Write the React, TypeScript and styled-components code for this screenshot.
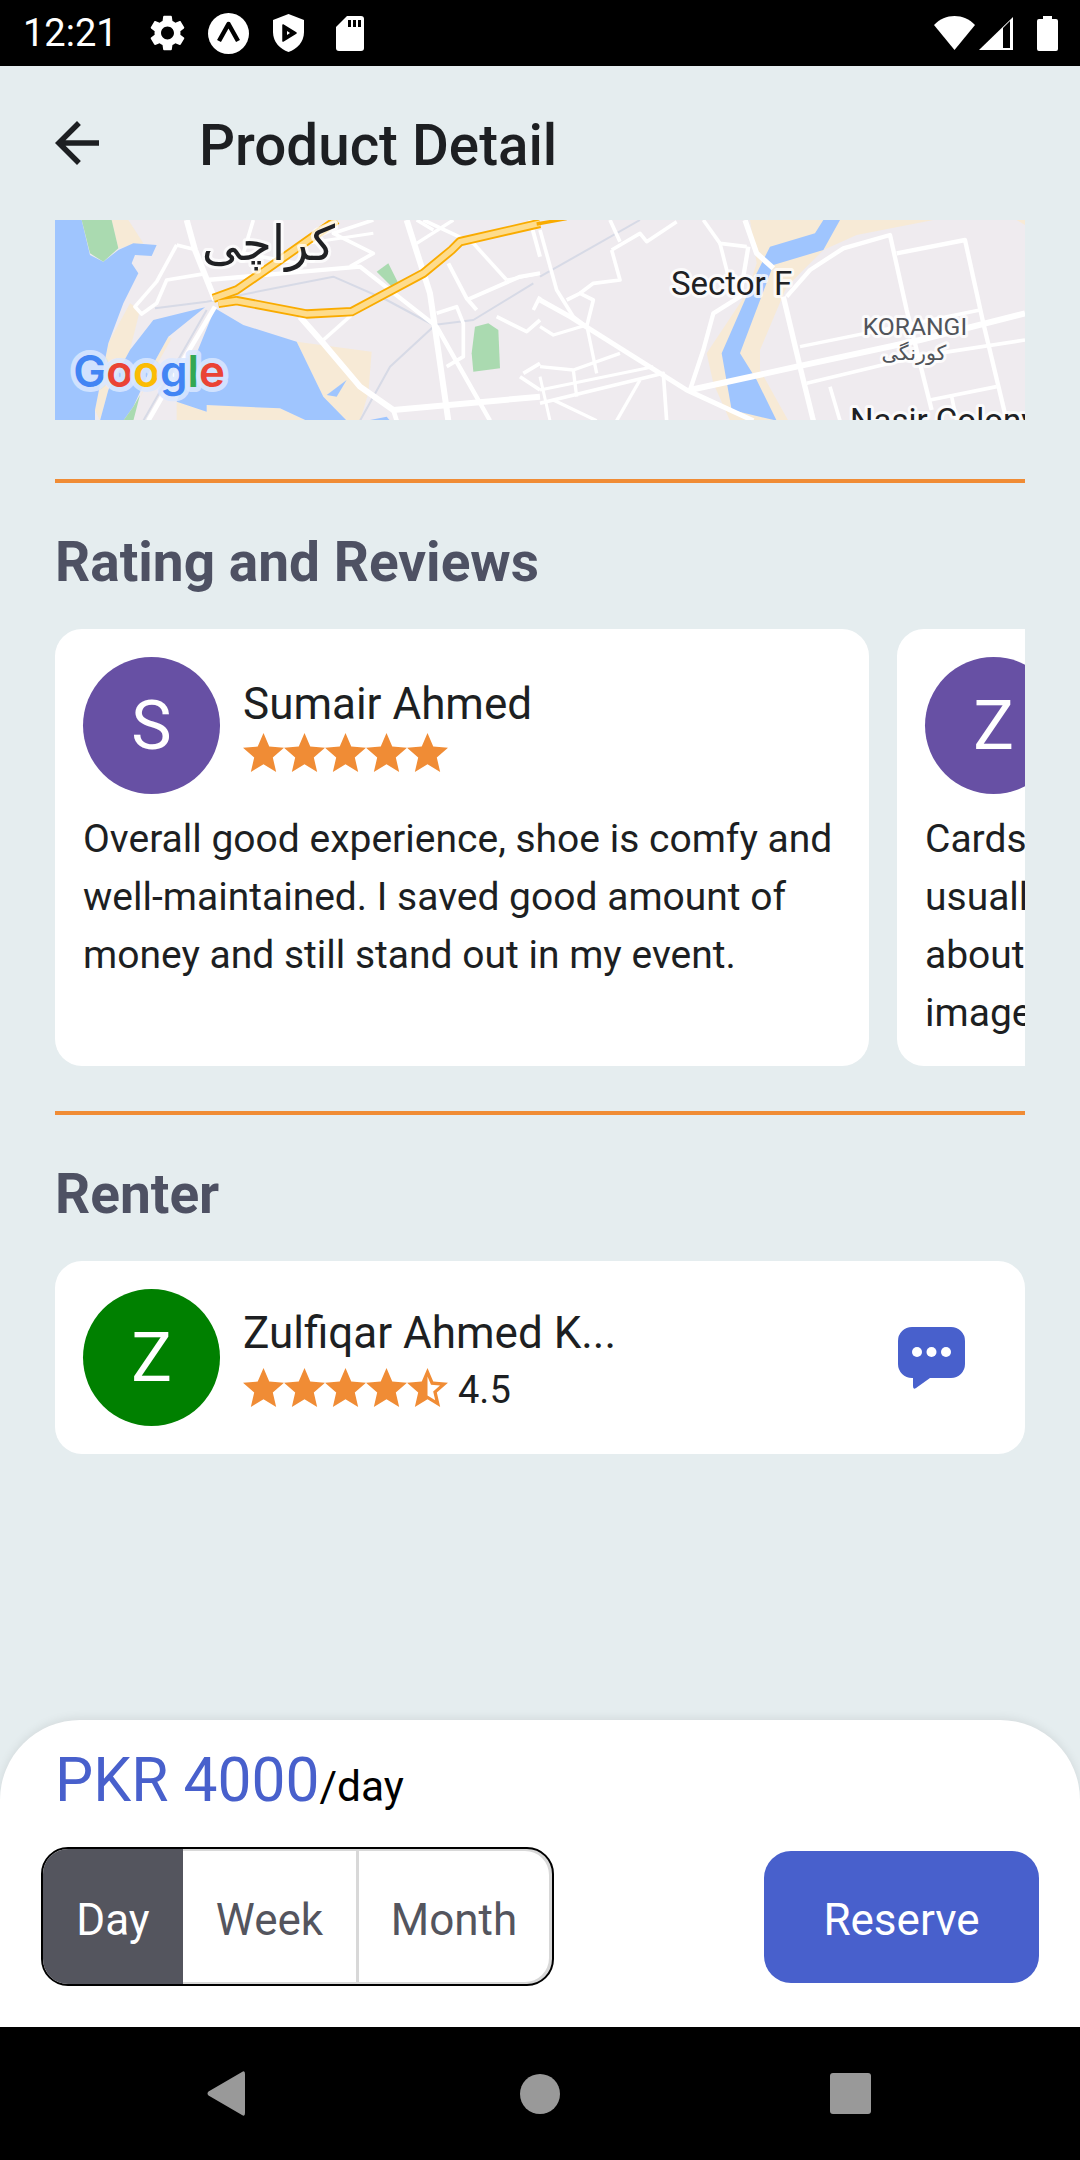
import styled, { createGlobalStyle } from 'styled-components';

const GlobalStyle = createGlobalStyle`
  html, body {
    margin: 0;
    padding: 0;
    background: #000;
  }
  * {
    box-sizing: border-box;
  }
`;

const Page = styled.div`
  width: 1080px;
  height: 2160px;
  display: flex;
  flex-direction: column;
  font-family: Roboto, "Noto Sans", sans-serif;
  background: #e5edef;
  overflow: hidden;
`;

const StatusBar = styled.div`
  height: 66px;
  flex: none;
  background: #000;
  color: #fff;
  display: flex;
  align-items: center;
  justify-content: space-between;
  padding: 0 22px 0 23px;
`;

const StatusGroup = styled.div`
  display: flex;
  align-items: center;
  gap: 23px;
`;

const StatusRight = styled.div`
  display: flex;
  align-items: center;
  gap: 4px;
`;

const Clock = styled.span`
  font-size: 38px;
  line-height: 66px;
  margin-right: 9px;
`;

const Content = styled.div`
  flex: 1;
  display: flex;
  flex-direction: column;
  padding: 0 55px;
`;

const Header = styled.div`
  height: 154px;
  display: flex;
  align-items: center;
  gap: 100px;
`;

const Title = styled.h1`
  margin: 5px 0 0;
  font-size: 56.5px;
  font-weight: 500;
  color: #1d1f22;
`;

const MapBox = styled.div`
  height: 200px;
  overflow: hidden;
  background: #efebef;

  svg {
    display: block;
  }
`;

const Divider = styled.div<{ $top: number }>`
  height: 4px;
  flex: none;
  background: #f08c35;
  margin-top: ${(p) => p.$top}px;
`;

const SectionTitle = styled.h2`
  margin: 0;
  height: 146px;
  padding-top: 46px;
  font-size: 55px;
  line-height: 66px;
  font-weight: 700;
  color: #4e5163;
`;

const ReviewRow = styled.div`
  display: flex;
  gap: 28px;
  overflow: hidden;
`;

const ReviewCard = styled.div`
  flex: none;
  width: 814px;
  height: 437px;
  background: #fff;
  border-radius: 27px;
  padding: 28px;
`;

const RenterCard = styled.div`
  height: 193px;
  background: #fff;
  border-radius: 27px;
  padding: 28px;
  display: flex;
  align-items: center;
  justify-content: space-between;
`;

const Person = styled.div`
  display: flex;
  align-items: center;
  gap: 23px;
`;

const Avatar = styled.div<{ $color: string }>`
  width: 137px;
  height: 137px;
  flex: none;
  border-radius: 50%;
  background: ${(p) => p.$color};
  color: #fff;
  font-size: 68px;
  display: flex;
  align-items: center;
  justify-content: center;
`;

const NameBlock = styled.div<{ $gap: number }>`
  display: flex;
  flex-direction: column;
  gap: ${(p) => p.$gap}px;
`;

const Name = styled.div`
  font-size: 44px;
  line-height: 50px;
  color: #1d1f22;
  white-space: nowrap;
`;

const Stars = styled.div`
  display: flex;
  align-items: center;
  height: 40px;

  svg {
    display: block;
  }
`;

const RatingValue = styled.span`
  font-size: 38px;
  color: #1d1f22;
  margin: 4px 0 0 10px;
`;

const ReviewText = styled.p`
  margin: 16px 0 0;
  font-size: 39px;
  line-height: 58px;
  color: #1d1f22;
  white-space: nowrap;
`;

const ChatButton = styled.div`
  margin-right: 32px;

  svg {
    display: block;
  }
`;

const Sheet = styled.div`
  flex: none;
  height: 307px;
  background: #fff;
  border-radius: 80px 80px 0 0;
  box-shadow: 0 -2px 10px rgba(0, 0, 0, 0.08);
  padding: 26px 41px 0;
`;

const PriceLine = styled.div`
  padding-left: 14px;
  height: 101px;
  white-space: nowrap;
`;

const Price = styled.span`
  font-size: 60.5px;
  line-height: 70px;
  color: #4860cc;
`;

const PriceUnit = styled.span`
  font-size: 42.5px;
  color: #000;
`;

const ControlRow = styled.div`
  display: flex;
  align-items: center;
  justify-content: space-between;
`;

const Segments = styled.div`
  width: 513px;
  height: 139px;
  display: flex;
  border: 2px solid #000;
  border-radius: 27px;
  overflow: hidden;
  background: #d8d8d8;
  padding: 2px 3px 2px 0;
`;

const Segment = styled.div<{ $active?: boolean; $width: number }>`
  width: ${(p) => p.$width}px;
  flex: ${(p) => (p.$width ? 'none' : '1')};
  display: flex;
  align-items: center;
  justify-content: center;
  padding-top: 6px;
  font-size: 44px;
  color: ${(p) => (p.$active ? '#fff' : '#54555e')};
  background: ${(p) => (p.$active ? '#54555e' : '#fff')};
  & + & + & {
    margin-left: 3px;
    border-radius: 0 24px 24px 0;
  }
  ${(p) => (p.$active ? 'margin: -2px 0;' : '')}
`;

const ReserveButton = styled.div`
  width: 275px;
  height: 132px;
  border-radius: 27px;
  background: #4860cc;
  color: #fff;
  font-size: 44px;
  padding-top: 6px;
  display: flex;
  align-items: center;
  justify-content: center;
`;

const NavBar = styled.div`
  height: 133px;
  flex: none;
  background: #000;
  display: flex;
  align-items: center;
  justify-content: space-between;
  padding: 0 209px 0 207px;

  svg {
    display: block;
  }
`;

const NavCircle = styled.div`
  width: 40px;
  height: 40px;
  margin-left: 5px;
  border-radius: 50%;
  background: #999;
`;

const NavSquare = styled.div`
  width: 41px;
  height: 41px;
  border-radius: 3px;
  background: #999;
`;

// map pieces, coords taken from 3x crops of the two halves of the map
const water1 = [
  '45,30 125,30 150,135 190,155 235,120 280,100 350,105 335,138 285,135 275,160 295,190 250,280 205,400 165,600 165,632 45,632',
  '340,330 495,292 385,380 330,480 280,590 250,632 180,632 205,540 270,420',
  '525,295 610,345 770,395 850,560 920,632 800,632 720,595 500,585 500,605 410,575 470,430',
  '860,555 920,510 890,560',
  '980,632 1040,620 1050,632',
];
const sand1 = [
  '215,30 265,30 310,100 235,115',
  '270,280 205,400 165,600 180,632 205,540 270,420 300,300',
  '385,380 395,385 330,500 300,565 330,480',
  '770,395 995,425 985,550 960,632 920,632 850,560',
  '410,575 500,605 500,585 720,595 800,632 410,632',
  '580,460 625,490 575,500',
];
const green1 = [
  '125,30 215,30 235,115 190,155 150,130',
  '1010,185 1045,160 1075,220 1060,235',
  '1295,430 1305,350 1345,340 1375,360 1380,475 1300,485',
  '250,632 280,590 300,555 280,632',
];
const rail1 = [
  '345,295 500,275 880,200 1040,270 1180,345 1300,330 1480,220',
  '960,632 1050,470 1180,350',
  '310,632 500,300',
];
const roads1: [string, number][] = [
  ['440,30 465,120 525,270', 18],
  ['410,105 350,215 285,290 305,312 350,280 380,210 500,190', 11],
  ['410,105 470,120', 11],
  ['500,210 960,170 1190,350 1350,632', 13],
  ['525,290 430,450 325,632', 14],
  ['780,320 850,400 960,530 1060,600 1500,560', 18],
  ['850,390 940,310', 11],
  ['1100,30 1170,250 1225,632', 18],
  ['1280,270 1440,200 1500,190', 12],
  ['1225,160 1280,265 1310,300', 12],
  ['1190,310 1250,290 1270,340 1270,440 1220,470', 11],
  ['1370,320 1460,365 1500,330', 11],
  ['1440,500 1500,540', 11],
  ['1450,490 1500,460', 11],
  ['640,30 610,130 800,165', 11],
  ['1000,30 880,70 1000,130 930,170', 11],
  ['800,100 1000,70', 9],
  ['1150,30 1300,100 1400,210', 11],
  ['1400,210 1500,190', 9],
  ['1060,600 1070,632', 14],
  ['1470,30 1500,140', 12],
  ['1480,300 1500,260', 11],
  ['1130,100 1240,30', 10],
  ['1180,60 1130,30', 10],
];
const highway = [
  '520,265 590,240 720,150 890,30',
  '535,280 590,272 800,312 935,305 1150,190 1235,120 1260,95 1500,40',
];

const water2 = ['850,30 900,30 850,120 700,165 600,430 650,510 710,632 575,600 545,430 650,190 690,110 825,70'];
const sand2 = [
  '630,30 1180,30 950,75 850,120 740,230 660,420 660,480 745,632 570,632 520,520 500,430 620,250 650,160',
  '1430,30 1455,30 1455,45',
];
const rail2 = ['0,200 300,30'];
const roads2: [string, number][] = [
  ['615,30 650,130 700,175', 16],
  ['490,30 540,100 620,110', 11],
  ['540,100 565,200', 11],
  ['625,110 600,260 520,310 490,420 450,540', 13],
  ['740,260 810,180 910,115 1050,75 1100,300 1175,600', 13],
  ['1070,130 1275,90 1330,340 1400,632', 13],
  ['730,260 780,470 820,632', 16],
  ['450,540 770,470 1140,390 1455,310', 18],
  ['780,410 1320,300', 10],
  ['800,520 1130,440 1455,390', 11],
  ['870,530 900,632', 11],
  ['1170,570 1370,530', 11],
  ['1235,560 1250,632', 11],
  ['0,270 90,320 440,540 640,632', 15],
  ['0,60 50,240 100,320 140,350 160,270 120,250 80,270', 11],
  ['215,120 300,70 320,95 410,35', 11],
  ['215,120 240,210 160,220 120,250', 11],
  ['210,30 240,95', 11],
  ['0,350 40,375 140,345 170,490', 10],
  ['240,430 100,480 0,470', 10],
  ['0,580 370,490 380,632', 11],
  ['0,540 340,470', 9],
  ['100,480 110,560', 10],
  ['230,632 300,510', 10],
  ['40,570 170,632', 10],
  ['0,500 30,632', 9],
];

const shapes = (list: string[], fill: string) => list.map((pts) => <polygon key={pts} points={pts} fill={fill} />);
const lines = (list: string[], color: string, width: number) =>
  list.map((pts) => (
    <polyline key={pts} points={pts} fill="none" stroke={color} strokeWidth={width} strokeLinejoin="round" />
  ));

function KarachiMap() {
  const halo = { paintOrder: 'stroke', stroke: '#fff', strokeOpacity: 0.75, strokeWidth: 18, strokeLinejoin: 'round' } as const;
  return (
    <svg width="970" height="200" viewBox="0 0 970 200">
      <g transform="translate(-15 -10) scale(0.33333)">
        {shapes(sand1, '#f7ead6')}
        {shapes(water1, '#9fc5fe')}
        {shapes(green1, '#aadab0')}
        {lines(rail1, '#d7dae6', 6)}
        {roads1.map(([pts, w]) => (
          <polyline key={pts} points={pts} fill="none" stroke="#fff" strokeWidth={w} strokeLinejoin="round" />
        ))}
        {lines(highway, '#f9ab00', 28)}
        {lines(highway, '#fedc8c', 17)}
        <text x="485" y="150" fontSize="145" fill="#202124" fontFamily="'DejaVu Sans', sans-serif" style={halo}>
          کراچی
        </text>
        <text x="100" y="530" fontSize="132" fontFamily="Inter, sans-serif" fontWeight="600" style={{ ...halo, stroke: '#dbe8ff', strokeOpacity: 0.85, strokeWidth: 30 }}>
          <tspan fill="#4285f4">G</tspan>
          <tspan fill="#ea4335">o</tspan>
          <tspan fill="#fbbc05">o</tspan>
          <tspan fill="#4285f4">g</tspan>
          <tspan fill="#34a853">l</tspan>
          <tspan fill="#ea4335">e</tspan>
        </text>
      </g>
      <g transform="translate(485 -10) scale(0.33333)">
        {shapes(sand2, '#f7ead6')}
        {shapes(water2, '#9fc5fe')}
        {lines(rail2, '#d7dae6', 6)}
        {roads2.map(([pts, w]) => (
          <polyline key={pts} points={pts} fill="none" stroke="#fff" strokeWidth={w} strokeLinejoin="round" />
        ))}
        {lines(['-10,42 80,26'], '#f9ab00', 10)}
        <text x="393" y="255" fontSize="99" fill="#202124" style={halo}>
          Sector F
        </text>
        <text x="968" y="375" fontSize="74" fill="#50545a" style={halo}>
          KORANGI
        </text>
        <text x="1122" y="450" fontSize="62" fill="#50545a" textAnchor="middle" fontFamily="'DejaVu Sans', sans-serif" style={halo}>
          کورنگی
        </text>
        <text x="930" y="665" fontSize="99" fill="#202124" style={halo}>
          Nasir Colony
        </text>
      </g>
    </svg>
  );
}

function Star({ half }: { half?: boolean }) {
  return (
    <svg width="41" height="39" viewBox="2 2 20 19" fill="#f08c35">
      {half ? (
        <path d="M22 9.24l-7.19-.62L12 2 9.19 8.63 2 9.24l5.46 4.73L5.82 21 12 17.27 18.18 21l-1.63-7.03L22 9.24zM12 15.4V6.1l1.71 4.04 4.38.38-3.32 2.88 1 4.28L12 15.4z" />
      ) : (
        <path d="M12 17.27L18.18 21l-1.64-7.03L22 9.24l-7.19-.61L12 2 9.19 8.63 2 9.24l5.46 4.73L5.82 21z" />
      )}
    </svg>
  );
}

export default function App() {
  return (
    <Page>
      <GlobalStyle />
      <StatusBar>
        <StatusGroup>
          <Clock>12:21</Clock>
          <svg width="35" height="36" viewBox="2.5 2 19 20" fill="#fff">
            <path d="M19.14 12.94c.04-.3.06-.61.06-.94 0-.32-.02-.64-.07-.94l2.03-1.58c.18-.14.23-.41.12-.61l-1.92-3.32c-.12-.22-.37-.29-.59-.22l-2.39.96c-.5-.38-1.03-.7-1.62-.94l-.36-2.54c-.04-.24-.24-.41-.48-.41h-3.84c-.24 0-.43.17-.47.41l-.36 2.54c-.59.24-1.13.57-1.62.94l-2.39-.96c-.22-.08-.47 0-.59.22L2.74 8.87c-.12.21-.08.47.12.61l2.03 1.58c-.05.3-.09.63-.09.94s.02.64.07.94l-2.03 1.58c-.18.14-.23.41-.12.61l1.92 3.32c.12.22.37.29.59.22l2.39-.96c.5.38 1.03.7 1.62.94l.36 2.54c.05.24.24.41.48.41h3.84c.24 0 .44-.17.47-.41l.36-2.54c.59-.24 1.13-.56 1.62-.94l2.39.96c.22.08.47 0 .59-.22l1.92-3.32c.12-.22.07-.47-.12-.61l-2.01-1.58zM12 15.6c-1.98 0-3.6-1.62-3.6-3.6s1.62-3.6 3.6-3.6 3.6 1.62 3.6 3.6-1.62 3.6-3.6 3.6z" />
          </svg>
          <svg width="41" height="41" viewBox="0 0 41 41">
            <circle cx="20.5" cy="20.5" r="20.5" fill="#fff" />
            <path d="M11 28 L20.5 11 L30 28" fill="none" stroke="#000" strokeWidth="4.5" strokeLinejoin="round" />
          </svg>
          <svg width="31" height="38" viewBox="0 0 31 38" style={{ marginLeft: 1 }}>
            <path d="M15.5 0 L31 6 V18 C31 28 24 35 15.5 38 C7 35 0 28 0 18 V6 Z" fill="#fff" />
            <path d="M10 11 L23 19 L10 27 Z" fill="#000" stroke="#000" strokeWidth="1.5" strokeLinejoin="round" />
            <path d="M14 17 L17 19 L14 21 Z" fill="#fff" />
          </svg>
          <svg width="28" height="35" viewBox="0 0 28 35" style={{ marginLeft: 9 }}>
            <path d="M11 0 H25 A3 3 0 0 1 28 3 V32 A3 3 0 0 1 25 35 H3 A3 3 0 0 1 0 32 V11 Z" fill="#fff" />
            <path d="M12 4h3v7h-3zM17 4h3v7h-3zM22 4h3v7h-3z" fill="#000" />
          </svg>
        </StatusGroup>
        <StatusRight>
          <svg width="41" height="34" viewBox="0 0 41 34">
            <path d="M0 9 C11 -3 30 -3 41 9 L20.5 34 Z" fill="#fff" />
          </svg>
          <svg width="34" height="33" viewBox="0 0 34 33" style={{ marginRight: 20 }}>
            <path d="M0 33 L34 0 V33 Z" fill="#fff" />
            <path d="M24 11 L31 4 V31 H24 Z" fill="#000" />
          </svg>
          <svg width="21" height="35" viewBox="0 0 21 35">
            <path d="M6 0h9v3h4a2 2 0 0 1 2 2v28a2 2 0 0 1-2 2H2a2 2 0 0 1-2-2V5a2 2 0 0 1 2-2h4z" fill="#fff" />
          </svg>
        </StatusRight>
      </StatusBar>

      <Content>
        <Header>
          <svg width="44" height="44" viewBox="4 4 16 16" fill="#1d1f22">
            <path d="M20 11H7.83l5.59-5.59L12 4l-8 8 8 8 1.41-1.41L7.83 13H20v-2z" />
          </svg>
          <Title>Product Detail</Title>
        </Header>
        <MapBox>
          <KarachiMap />
        </MapBox>
        <Divider $top={59} />
        <SectionTitle>Rating and Reviews</SectionTitle>
        <ReviewRow>
          <ReviewCard>
            <Person>
              <Avatar $color="#6750a4">S</Avatar>
              <NameBlock $gap={3}>
                <Name>Sumair Ahmed</Name>
                <Stars>
                  <Star />
                  <Star />
                  <Star />
                  <Star />
                  <Star />
                </Stars>
              </NameBlock>
            </Person>
            <ReviewText>
              Overall good experience, shoe is comfy and
              <br />
              well-maintained. I saved good amount of
              <br />
              money and still stand out in my event.
            </ReviewText>
          </ReviewCard>
          <ReviewCard>
            <Person>
              <Avatar $color="#6750a4">Z</Avatar>
            </Person>
            <ReviewText>
              Cards
              <br />
              usually
              <br />
              about
              <br />
              images
            </ReviewText>
          </ReviewCard>
        </ReviewRow>
        <Divider $top={45} />
        <SectionTitle>Renter</SectionTitle>
        <RenterCard>
          <Person>
            <Avatar $color="#008000">Z</Avatar>
            <NameBlock $gap={10}>
              <Name>Zulfiqar Ahmed K...</Name>
              <Stars>
                <Star />
                <Star />
                <Star />
                <Star />
                <Star half />
                <RatingValue>4.5</RatingValue>
              </Stars>
            </NameBlock>
          </Person>
          <ChatButton>
            <svg width="67" height="62" viewBox="0 0 67 62">
              <path d="M14 0 H53 A14 14 0 0 1 67 14 V37 A14 14 0 0 1 53 51 H32 L18 61 Q15 63 15 59 V51 H14 A14 14 0 0 1 0 37 V14 A14 14 0 0 1 14 0 Z" fill="#4860cc" />
              <circle cx="19" cy="25" r="5" fill="#fff" />
              <circle cx="33.5" cy="25" r="5" fill="#fff" />
              <circle cx="48" cy="25" r="5" fill="#fff" />
            </svg>
          </ChatButton>
        </RenterCard>
      </Content>

      <Sheet>
        <PriceLine>
          <Price>PKR 4000</Price>
          <PriceUnit>/day</PriceUnit>
        </PriceLine>
        <ControlRow>
          <Segments>
            <Segment $active $width={140}>Day</Segment>
            <Segment $width={173}>Week</Segment>
            <Segment $width={0}>Month</Segment>
          </Segments>
          <ReserveButton>Reserve</ReserveButton>
        </ControlRow>
      </Sheet>

      <NavBar>
        <svg width="38" height="45" viewBox="0 0 38 45">
          <path d="M35 1 Q38 -1 38 3 V42 Q38 46 35 44 L1.5 24.5 Q-0.5 22.5 1.5 20.5 Z" fill="#999" />
        </svg>
        <NavCircle />
        <NavSquare />
      </NavBar>
    </Page>
  );
}
